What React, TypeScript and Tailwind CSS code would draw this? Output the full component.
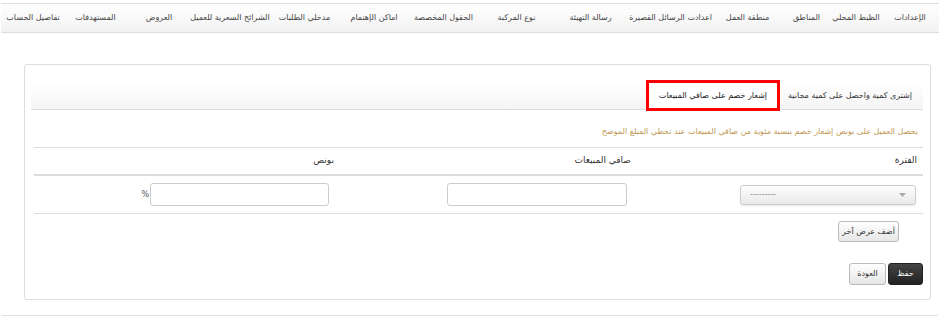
import React from "react";

const navItems: [string, string][] = [
  ["الإعدادات", "w-[58px]"],
  ["الظبط المحلي", "w-[50px]"],
  ["المناطق", "w-[49px]"],
  ["منطقة العمل", "w-[69px]"],
  ["اعدادت الرسائل القصيرة", "w-[85px]"],
  ["رسالة التهيئة", "w-[75px]"],
  ["نوع المركبة", "w-[73px]"],
  ["الحقول المخصصة", "w-[73px]"],
  ["اماكن الإهتمام", "w-[66px]"],
  ["مدخلي الطلبات", "w-[73px]"],
  ["الشرائح السعرية للعميل", "w-[76px]"],
  ["العروض", "w-[66px]"],
  ["المستهدفات", "w-[61px]"],
  ["تفاصيل الحساب", "w-[64px]"],
];

export default function App() {
  return (
    <div
      dir="rtl"
      className="h-[327px] w-[939px] bg-white pt-[3px] text-[#333]"
      style={{fontFamily: '"DejaVu Sans", Tahoma, sans-serif'}}
    >
      <div className="h-[313px] w-[938px] rounded-bl-[3px] rounded-br-[3px] border-b border-[#ddd]">
        {/* top nav */}
        <div className="flex h-[30px] items-center border-y border-[#ddd] bg-gradient-to-b from-white to-[#f2f2f2]">
          {navItems.map(([label, w]) => (
            <span
              key={label}
              className={`${w} flex shrink-0 justify-center whitespace-nowrap text-[8px] tracking-[-0.4px] text-[#444]`}
            >
              {label}
            </span>
          ))}
        </div>

        {/* card */}
        <div className="mr-[8px] ml-[23px] mt-[31px] h-[236px] rounded-[3px] border border-[#ddd] pt-[18px]">
          {/* tabs */}
          <div className="mr-[7px] ml-[6px] flex h-[27px] items-end border-b border-[#ddd] bg-gradient-to-b from-white to-[#f4f4f4] pr-[11px]">
            <div className="flex h-full items-center whitespace-nowrap text-[8px] tracking-[-0.45px] text-[#333]">
              إشترى كمية واحصل على كمية مجانية
            </div>
            <div className="mr-[8px] -mb-[2px] flex h-[31px] items-center whitespace-nowrap border-[3px] border-[#f00] bg-white px-[10px] text-[8px] tracking-[-0.35px] text-[#222]">
              إشعار خصم على صافي المبيعات
            </div>
          </div>

          <p className="mr-[12px] mt-[16px] text-[8px] tracking-[-0.2px] text-[#c09853]">
            يحصل العميل على بونص إشعار خصم بنسبة مئوية من صافي المبيعات عند تخطي المبلغ الموضح
          </p>

          {/* table */}
          <div className="mr-[7px] ml-[9px] mt-[9px] border-t border-[#ddd]">
            <div className="grid h-[28px] grid-cols-[290px_297px_1fr] items-center border-b-2 border-[#ddd] text-[9px] text-[#333]">
              <div className="pr-[6px]">الفترة</div>
              <div className="pr-[2px]">صافي المبيعات</div>
              <div className="pr-[2px]">بونص</div>
            </div>
            <div className="grid h-[38px] grid-cols-[290px_297px_1fr] items-center border-b border-[#ddd]">
              <div className="pr-[7px]">
                <div className="flex h-[20px] w-[176px] items-center justify-between rounded-[3px] border border-[#ccc] bg-gradient-to-b from-white to-[#e8e8e8] px-[9px] shadow-[0_1px_2px_rgba(0,0,0,0.1)]">
                  <svg width="7" height="4" viewBox="0 0 7 4">
                    <path d="M0 0h7L3.5 4z" fill="#aaa" />
                  </svg>
                  <span className="text-[8px] leading-none text-[#888]">---------</span>
                </div>
              </div>
              <div className="pr-[6px]">
                <div className="h-[23px] w-[180px] rounded-[3px] border border-[#ccc] bg-white" />
              </div>
              <div className="flex items-center pr-[7px]">
                <div className="h-[23px] w-[179px] rounded-[3px] border border-[#ccc] bg-white" />
                <span className="mr-[1px] text-[8px] text-[#555]">%</span>
              </div>
            </div>
          </div>

          <div className="mr-[31px] mt-[7px] flex">
            <button className="h-[21px] w-[61px] whitespace-nowrap rounded-[3px] border border-[#bbb] bg-gradient-to-b from-white to-[#e6e6e6] text-[8px] tracking-[-0.3px] text-[#333]">
              أضف عرض آخر
            </button>
          </div>

          <div className="mr-[7px] mt-[21px] flex gap-[2px]">
            <button className="h-[22px] w-[35px] rounded-[3px] border border-[#222] bg-gradient-to-b from-[#444] to-[#222] text-[8px] text-white">
              حفظ
            </button>
            <button className="h-[22px] w-[37px] rounded-[3px] border border-[#bbb] bg-gradient-to-b from-white to-[#e6e6e6] text-[8px] text-[#333]">
              العودة
            </button>
          </div>
        </div>
      </div>
    </div>
  );
}
